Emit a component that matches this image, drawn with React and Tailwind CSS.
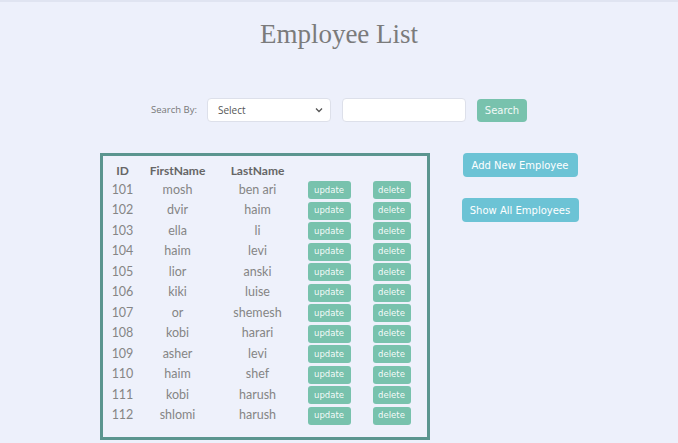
import React from "react";

const rows = [
  ["101", "mosh", "ben ari"],
  ["102", "dvir", "haim"],
  ["103", "ella", "li"],
  ["104", "haim", "levi"],
  ["105", "lior", "anski"],
  ["106", "kiki", "luise"],
  ["107", "or", "shemesh"],
  ["108", "kobi", "harari"],
  ["109", "asher", "levi"],
  ["110", "haim", "shef"],
  ["111", "kobi", "harush"],
  ["112", "shlomi", "harush"],
];

const body = { fontFamily: '"Lato", "Open Sans", sans-serif' };
const btn = { fontFamily: '"DejaVu Sans", "Open Sans", sans-serif' };

export default function App() {
  return (
    <div className="min-h-[443px] w-full bg-[#edf0fb] border-t-2 border-[#e0e4f1]" style={body}>
      <h1
        className="pt-[16px] text-center text-[27px] leading-[32px] text-[#7b7b7b]"
        style={{ fontFamily: '"Liberation Serif", "DejaVu Serif", serif' }}
      >
        Employee List
      </h1>

      <div className="mt-[48px] flex items-center justify-center">
        <span className="text-[9.5px] text-[#777] mr-[10px]" style={{ fontFamily: '"Open Sans", sans-serif' }}>Search By:</span>
        <div className="flex h-[24px] w-[124px] items-center justify-between rounded-[4px] border border-[#dde0ea] bg-white pl-[10px] pr-[7px]">
          <span className="text-[10px] text-[#555]" style={{ fontFamily: '"Open Sans", sans-serif' }}>Select</span>
          <svg width="8" height="6" viewBox="0 0 8 6">
            <path d="M1 1.5 L4 4.5 L7 1.5" fill="none" stroke="#555" strokeWidth="1.3" />
          </svg>
        </div>
        <div className="ml-[11px] h-[24px] w-[124px] rounded-[4px] border border-[#dde0ea] bg-white" />
        <button
          className="ml-[11px] h-[23px] w-[50px] rounded-[4px] bg-[#78c2ad] text-[10px] text-white/90"
          style={btn}
        >
          Search
        </button>
      </div>

      <div className="mt-[31px] flex items-start justify-center gap-[32px]">
        <div className="w-[330px] border-[3px] border-[#5b958f] bg-[#eef1fb] pl-[6px] pt-[6px] pb-[11px]">
          <div className="flex h-[18px] items-center text-[12px] font-bold text-[#666]">
            <div className="w-[28px] text-center">ID</div>
            <div className="w-[82px] text-center">FirstName</div>
            <div className="w-[78px] text-center">LastName</div>
          </div>
          {rows.map(([id, f, l]) => (
            <div key={id} className="flex h-[20.5px] items-center text-[12.5px] text-[#858585]">
              <div className="w-[28px] text-center">{id}</div>
              <div className="w-[82px] text-center">{f}</div>
              <div className="w-[78px] text-center">{l}</div>
              <button
                className="ml-[11px] h-[18px] w-[43px] rounded-[3px] bg-[#78c2ad] text-[8.5px] text-white/95"
                style={btn}
              >
                update
              </button>
              <button
                className="ml-[22px] h-[18px] w-[38px] rounded-[3px] bg-[#78c2ad] text-[8.5px] text-white/95"
                style={btn}
              >
                delete
              </button>
            </div>
          ))}
        </div>

        <div className="flex flex-col items-center gap-[21px]">
          <button
            className="h-[24px] w-[115px] rounded-[4px] bg-[#6cc3d5] text-[10px] text-white"
            style={btn}
          >
            Add New Employee
          </button>
          <button
            className="h-[24px] w-[117px] rounded-[4px] bg-[#6cc3d5] text-[10px] text-white"
            style={btn}
          >
            Show All Employees
          </button>
        </div>
      </div>
    </div>
  );
}
